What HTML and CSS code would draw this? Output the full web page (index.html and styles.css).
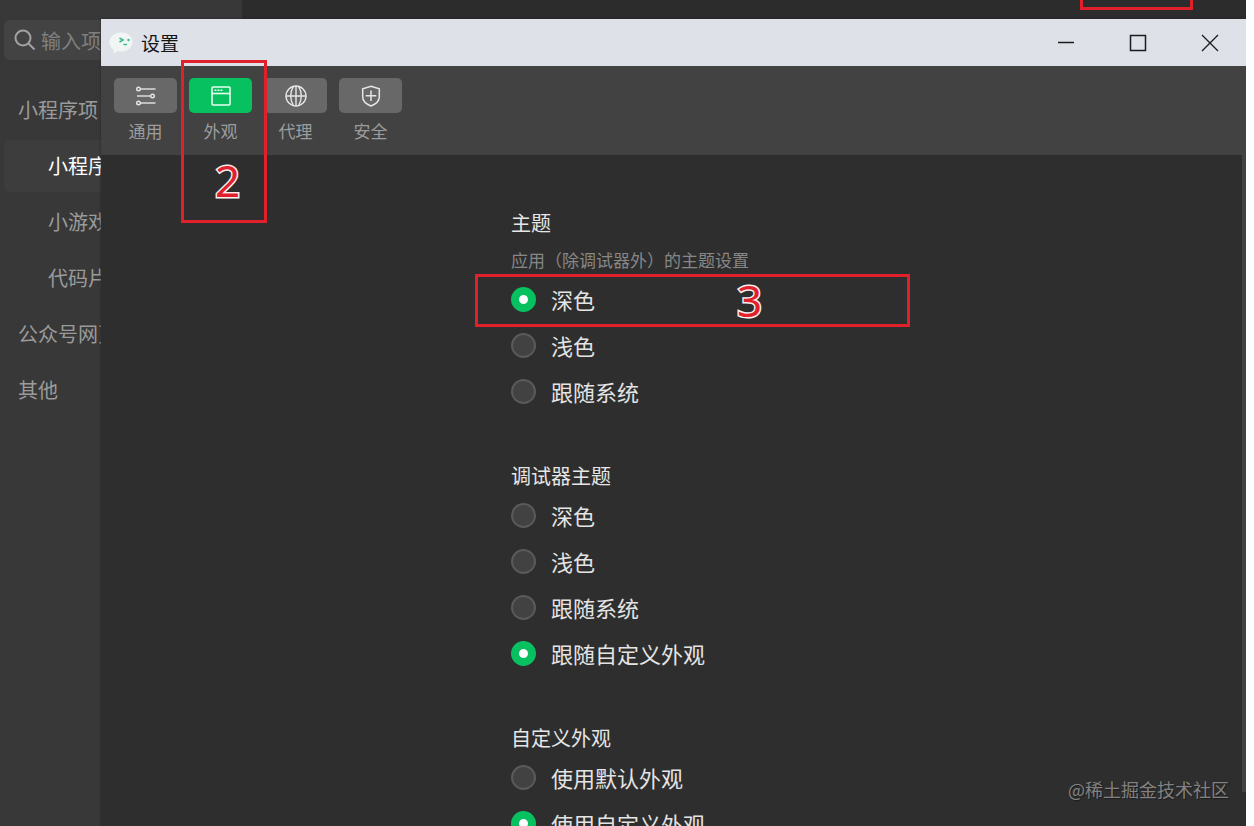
FILE: index.html
```html
<!doctype html>
<html lang="zh-CN">
  <head>
    <meta charset="UTF-8" />
    <meta name="viewport" content="width=device-width, initial-scale=1.0" />
    <title>设置</title>
    <link rel="stylesheet" href="styles.css">
  </head>
  <body>
    <div class="app">
      <aside class="sidebar">
        <label class="search">
          <svg width="22" height="22" viewBox="0 0 22 22" fill="none" stroke="#a2a2a2" stroke-width="2">
            <circle cx="9" cy="9" r="7.5" />
            <path d="M14.5 14.5L20.5 20.5" />
          </svg>
          <input type="text" placeholder="输入项" />
        </label>
        <nav class="nav">
          <a class="nav-item" href="#">小程序项</a>
          <a class="nav-item sub active" href="#">小程序</a>
          <a class="nav-item sub" href="#">小游戏</a>
          <a class="nav-item sub" href="#">代码片</a>
          <a class="nav-item" href="#">公众号网页</a>
          <a class="nav-item" href="#">其他</a>
        </nav>
      </aside>
      <div class="mark mark-top"></div>

      <div class="window">
        <header class="titlebar">
          <svg class="logo" width="26" height="24" viewBox="0 0 26 24">
            <path d="M13 1.5C6.4 1.5 1.5 5.8 1.5 11c0 3.300 1.700 5.900 4.300 7.700L5.300 22.500l4-2.300c1.200.3 2.400.4 3.700.4 6.600 0 11.500-4.300 11.500-9.600S19.600 1.500 13 1.500z" fill="#f1f6f5" />
            <path d="M11.500 7l3.500 2-3.500 2" fill="none" stroke="#35b98a" stroke-width="1.500" />
            <path d="M15.500 13.500h3.500" stroke="#35b98a" stroke-width="1.400" />
            <circle cx="20.500" cy="9" r="1.200" fill="#35b98a" />
          </svg>
          <h1 class="title">设置</h1>
          <div class="controls">
            <button type="button" aria-label="最小化">
              <svg width="18" height="18" viewBox="0 0 18 18" fill="none" stroke="#1c1c1e" stroke-width="1.500"><path d="M1 8.500h16" /></svg>
            </button>
            <button type="button" aria-label="最大化">
              <svg width="18" height="18" viewBox="0 0 18 18" fill="none" stroke="#1c1c1e" stroke-width="1.500"><path d="M1.500 1.500h15v15h-15z" /></svg>
            </button>
            <button type="button" aria-label="关闭">
              <svg width="18" height="18" viewBox="0 0 18 18" fill="none" stroke="#1c1c1e" stroke-width="1.300"><path d="M1 1l16 16M17 1L1 17" /></svg>
            </button>
          </div>
        </header>

        <div class="toolbar">
          <button type="button" class="tab">
            <span class="tab-icon">
              <svg width="22" height="22" viewBox="0 0 22 22" fill="none" stroke="#e6e6e6" stroke-width="1.400">
                <circle cx="3.500" cy="4" r="1.800" /><path d="M5.300 4H20.500" />
                <circle cx="17.500" cy="11" r="1.800" /><path d="M2 11h13.700" />
                <circle cx="3.500" cy="18" r="1.800" /><path d="M5.300 18H20.500" />
              </svg>
            </span>
            <span>通用</span>
          </button>
          <button type="button" class="tab selected">
            <span class="tab-icon">
              <svg width="22" height="22" viewBox="0 0 22 22" fill="none" stroke="#e8fff2" stroke-width="1.600">
                <rect x="2" y="2" width="18" height="18" rx="1" />
                <path d="M2 8.500h18" />
                <path d="M4.500 5.300h8" stroke-dasharray="2 1" />
              </svg>
            </span>
            <span>外观</span>
            <span class="mark mark-tab"><span class="digit">2</span></span>
          </button>
          <button type="button" class="tab">
            <span class="tab-icon">
              <svg width="22" height="22" viewBox="0 0 22 22" fill="none" stroke="#e6e6e6" stroke-width="1.400">
                <circle cx="11" cy="11" r="10" />
                <path d="M1 11h20M11 1v20M8.500 1.300C4.800 7 4.800 15 8.500 20.700M13.500 1.300c3.700 5.700 3.700 13.700 0 19.400" />
              </svg>
            </span>
            <span>代理</span>
          </button>
          <button type="button" class="tab">
            <span class="tab-icon">
              <svg width="22" height="22" viewBox="0 0 22 22" fill="none" stroke="#e6e6e6" stroke-width="1.500">
                <path d="M11 1.200l8.300 2.600v8.200c0 4-3.300 7-8.300 9-5-2-8.300-5-8.300-9V3.800z" />
                <path d="M11 5.500v10.500M5.700 10.700h10.600" />
              </svg>
            </span>
            <span>安全</span>
          </button>
        </div>

        <div class="content">
          <main class="settings">
            <section class="group">
              <h2>主题</h2>
              <p class="desc">应用（除调试器外）的主题设置</p>
              <div class="option">
                <label><input type="radio" name="theme" checked />深色</label>
                <div class="mark mark-row"><span class="digit">3</span></div>
              </div>
              <div class="option"><label><input type="radio" name="theme" />浅色</label></div>
              <div class="option"><label><input type="radio" name="theme" />跟随系统</label></div>
            </section>
            <section class="group">
              <h2>调试器主题</h2>
              <div class="option"><label><input type="radio" name="devtools" />深色</label></div>
              <div class="option"><label><input type="radio" name="devtools" />浅色</label></div>
              <div class="option"><label><input type="radio" name="devtools" />跟随系统</label></div>
              <div class="option"><label><input type="radio" name="devtools" checked />跟随自定义外观</label></div>
            </section>
            <section class="group">
              <h2>自定义外观</h2>
              <div class="option"><label><input type="radio" name="custom" />使用默认外观</label></div>
              <div class="option"><label><input type="radio" name="custom" checked />使用自定义外观</label></div>
            </section>
          </main>
          <div class="scrollbar"></div>
        </div>
      </div>
      <div class="watermark">@稀土掘金技术社区</div>
    </div>
  </body>
</html>
```
FILE: styles.css
```css
* {
  box-sizing: border-box;
}
body {
  margin: 0;
  padding-right: 8px;
  background: #fff;
  font-family: "Noto Sans CJK SC", sans-serif;
}
button {
  border: 0;
  padding: 0;
  background: none;
  font-family: inherit;
}
.app {
  position: relative;
  height: 100vh;
  overflow: hidden;
  background: #2c2c2c;
}

/* project list behind the dialog */
.sidebar {
  width: 242px;
  height: 100%;
  padding: 20px 4px;
  background: #383838;
}
.search {
  display: flex;
  align-items: center;
  gap: 5px;
  height: 40px;
  padding: 0 10px;
  border-radius: 6px;
  background: #434343;
}
.search input {
  width: 100%;
  border: 0;
  padding: 0;
  background: none;
  color: #ccc;
  font-family: inherit;
  font-size: 20px;
}
.search svg {
  flex: none;
}
.search input::placeholder {
  color: #7f7f7f;
}
.nav {
  display: flex;
  flex-direction: column;
  gap: 4px;
  margin-top: 24px;
}
.nav-item {
  padding-left: 14px;
  border-radius: 6px;
  color: #9b9b9b;
  font-size: 20px;
  line-height: 52px;
  text-decoration: none;
  white-space: nowrap;
}
.nav-item.sub {
  padding-left: 44px;
}
.nav-item.active {
  background: #3d3d3d;
  color: #fff;
}

/* settings dialog */
.window {
  position: absolute;
  top: 19px;
  right: 0;
  bottom: 0;
  left: 101px;
  display: flex;
  flex-direction: column;
  background: #2e2e2e;
  box-shadow: 0 0 2px #222;
}
.titlebar {
  display: flex;
  flex: none;
  align-items: center;
  height: 47px;
  padding-left: 7px;
  background: #dee1e8;
}
.title {
  flex: 1;
  margin: 0 0 0 7px;
  color: #151515;
  font-size: 19px;
  font-weight: 400;
  line-height: 28px;
}
.controls {
  display: flex;
}
.controls button {
  display: flex;
  align-items: center;
  justify-content: center;
  width: 72px;
  height: 47px;
}
.toolbar {
  display: flex;
  flex: none;
  gap: 12px;
  height: 89px;
  padding: 12px 13px 0;
  background: #424242;
}
.tab {
  position: relative;
  display: flex;
  flex-direction: column;
  align-items: center;
  gap: 5px;
  width: 63px;
  height: 66px;
  color: #9d9d9d;
  font-size: 17px;
  line-height: 26px;
}
.tab-icon {
  display: flex;
  flex: none;
  align-items: center;
  justify-content: center;
  width: 100%;
  height: 35px;
  border-radius: 5px;
  background: #686868;
}
.tab.selected {
  z-index: 1;
}
.tab.selected .tab-icon {
  background: #07c160;
}
.content {
  display: flex;
  flex: 1;
  min-height: 0;
  overflow: hidden;
}
.settings {
  width: 100%;
  max-width: 321px;
  margin: 0 auto;
  padding-top: 52px;
}
.scrollbar {
  flex: none;
  width: 4px;
  height: 95%;
  background: #424242;
}
.group {
  margin-bottom: 46px;
}
.group h2 {
  margin: 0;
  color: #e6e6e6;
  font-size: 20px;
  font-weight: 400;
  line-height: 32px;
}
.desc {
  margin: 5px 0 0;
  color: #878787;
  font-size: 17px;
  line-height: 32px;
  white-space: nowrap;
}
.option {
  position: relative;
}
.option label {
  display: flex;
  align-items: center;
  gap: 15px;
  height: 46px;
  color: #e4e4e4;
  font-size: 22px;
  line-height: 30px;
}
.option input {
  appearance: none;
  width: 25px;
  height: 25px;
  margin: 0;
  border: 2px solid #5a5a5a;
  border-radius: 50%;
  background: #424242;
}
.option input:checked {
  border: 8px solid #07c160;
  background: #fff;
}

/* red step marks */
.mark {
  position: absolute;
  border: 3px solid #e0202a;
  pointer-events: none;
}
.mark-top {
  top: -30px;
  right: 53px;
  width: 113px;
  height: 40px;
}
.mark-tab {
  top: -18px;
  left: -8px;
  width: 86px;
  height: 163px;
  padding: 94px 0 0 31px;
  text-align: left;
}
.mark-row {
  top: -2px;
  left: -36px;
  width: 435px;
  height: 53px;
  padding-left: 259px;
}
.digit {
  display: block;
  color: #e0202a;
  font-family: "Noto Sans", sans-serif;
  font-size: 44px;
  font-weight: 400;
  line-height: 46px;
  -webkit-text-stroke: 3px #fbeeee;
  paint-order: stroke fill;
}
.watermark {
  position: absolute;
  right: 17px;
  bottom: 23px;
  color: #828282;
  font-size: 18px;
  line-height: 28px;
  text-shadow: 1px 1px 1px #1c1c1c;
}
```
